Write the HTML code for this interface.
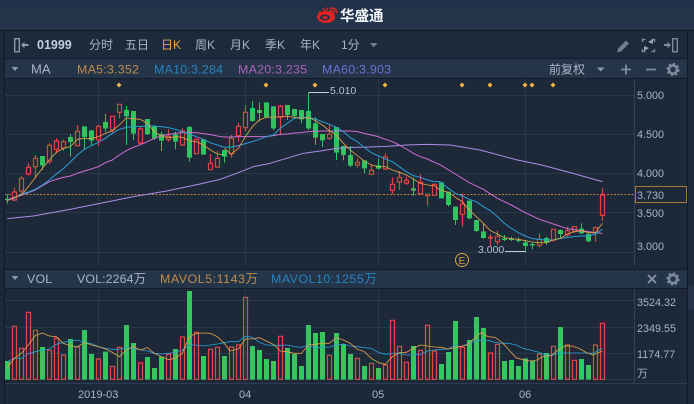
<!DOCTYPE html>
<html>
<head>
<meta charset="utf-8">
<style>
html,body{margin:0;padding:0;background:#1a2433;width:694px;height:404px;overflow:hidden}
svg{display:block}
text{font-family:"Liberation Sans","Noto Sans CJK SC",sans-serif}
</style>
</head>
<body>
<svg width="694" height="404" viewBox="0 0 694 404" xmlns="http://www.w3.org/2000/svg">
<defs>
<linearGradient id="tg" x1="0" y1="0" x2="0" y2="1"><stop offset="0" stop-color="#22324a"/><stop offset="1" stop-color="#23344b"/></linearGradient>
</defs>
<rect width="694" height="404" fill="#1c2839"/>
<rect width="694" height="30" fill="url(#tg)"/>
<rect y="30" width="694" height="1" fill="#121a26"/>
<rect x="5" y="31" width="682" height="27" fill="#1d2a3c"/>
<rect x="688" y="31" width="6" height="373" fill="#1d2a3c"/>
<rect x="688" y="285" width="6" height="24" fill="#253448"/>
<rect x="5" y="59" width="682" height="19" fill="#243449"/>
<rect y="58" x="5" width="682" height="1" fill="#131b28"/>
<rect y="78" x="5" width="682" height="1" fill="#131b28"/>
<rect x="5" y="79" width="682" height="187" fill="#1d2838"/>
<rect x="5" y="266" width="682" height="4" fill="#1c2737"/>
<rect x="5" y="269" width="682" height="1" fill="#131b28"/>
<rect x="5" y="270" width="682" height="18" fill="#243449"/>
<rect x="5" y="288" width="682" height="1" fill="#131b28"/>
<rect x="5" y="289" width="682" height="115" fill="#1d2838"/>
<rect x="4" y="31" width="1" height="373" fill="#121a26"/>
<rect x="687" y="31" width="1" height="373" fill="#121a26"/>
<rect x="5" y="383" width="682" height="1" fill="#2d3c50"/>

<!-- grid -->
<g stroke="#2a384b" stroke-width="1" fill="none">
<path d="M5 95.5H634M5 134.5H634M5 173.5H634M5 212.5H634M5 252.5H634"/>
<path d="M98.5 79V266M245.5 79V266M378.5 79V266M525.5 79V266"/>
<path d="M5 300.5H634M5 327.5H634M5 353.5H634M5 379.5H634"/>
<path d="M98.5 289V383M245.5 289V383M378.5 289V383M525.5 289V383"/>
<path d="M634.5 79V266M634.5 289V383" stroke="#344458"/>
</g>

<!-- title -->
<g>
<ellipse cx="326" cy="17" rx="9" ry="6" fill="#e2231f"/>
<ellipse cx="325" cy="17.5" rx="5" ry="3" fill="#22324a"/>
<ellipse cx="325" cy="17.5" rx="2.4" ry="1.5" fill="#e2231f"/>
<path d="M329 8.5Q336 7 337 13M329.5 11Q333.5 10 334 13.5M319 11.5L322 13M323 8.5L325 11.5M327 7.5V10.5" stroke="#e2231f" stroke-width="1.6" fill="none"/>
<text x="340" y="21" font-size="14.5" font-weight="700" fill="#f2f5f8">华盛通</text>
</g>

<!-- toolbar -->
<g font-size="12" fill="#a9b5c5">
<path d="M14.7 38.7h4.600v13h-4.600z" fill="none" stroke="#8d99a9" stroke-width="1.4"/>
<path d="M21 45l3.5-3.2v2.2h4v2h-4v2.2z" fill="#8d99a9"/>
<text x="37" y="49" font-size="12.5" font-weight="700" fill="#c3cfde">01999</text>
<text x="89" y="49">分时</text>
<text x="125" y="49">五日</text>
<text x="161" y="49" fill="#e5a94c">日K</text>
<text x="195" y="49">周K</text>
<text x="230" y="49">月K</text>
<text x="265" y="49">季K</text>
<text x="300" y="49">年K</text>
<text x="341" y="49">1分</text>
<path d="M370 43h7.5l-3.75 4.5z" fill="#6f7c8d"/>
<path d="M617 52.5l1-4 8-8 3 3-8 8z" fill="#6f7c8d"/>
<g stroke="#79869a" stroke-width="1.5" fill="none">
<path d="M642.5 42v-2.5h3M654.5 42v-2.5h-3M642.5 49v2.5h3M654.5 49v2.5h-3"/>
</g>
<path d="M648 42l5-3v5zM649 48l-5 3v-5z" fill="#9aa6b6"/>
<path d="M664 44h3.500v-2.200l3.500 3.200-3.500 3.200v-2.200h-3.500z" fill="#7f8c9e"/>
<path d="M672.700 38.700h4.600v13h-4.600z" fill="none" stroke="#7f8c9e" stroke-width="1.400"/>
</g>

<!-- MA row -->
<g font-size="12.4">
<path d="M11.5 67h7l-3.5 4z" fill="#8d99a9"/>
<text x="31" y="73.5" fill="#a9b5c5" font-size="13">MA</text>
<text x="77" y="73.5" fill="#c08d4c" letter-spacing=".25">MA5:3.352</text>
<text x="154" y="73.5" fill="#2785c0" letter-spacing=".25">MA10:3.284</text>
<text x="238" y="73.5" fill="#b15fbc" letter-spacing=".25">MA20:3.235</text>
<text x="322" y="73.5" fill="#6f6fd6" letter-spacing=".25">MA60:3.903</text>
<text x="549" y="73.5" fill="#a9b5c5" font-size="12">前复权</text>
<path d="M597 67.5h7.5l-3.75 4z" fill="#8d99a9"/>
<path d="M621 69.5h10M626 64.5v10" stroke="#7f8c9e" stroke-width="1.8" fill="none"/>
<path d="M646 69.5h10" stroke="#7f8c9e" stroke-width="1.8" fill="none"/>
<circle cx="673" cy="69.5" r="4" fill="none" stroke="#7f8c9e" stroke-width="2.4"/>
<circle cx="673" cy="69.5" r="5.8" fill="none" stroke="#7f8c9e" stroke-width="1.5" stroke-dasharray="2.5 2"/>
</g>

<!-- diamonds -->
<g fill="#f5b342">
<path d="M119 82.5l2.5 2.5-2.5 2.5-2.5-2.5zM266 82.5l2.5 2.5-2.5 2.5-2.5-2.5zM315 82.5l2.5 2.5-2.5 2.5-2.5-2.5zM385 82.5l2.5 2.5-2.5 2.5-2.5-2.5zM462 82.5l2.5 2.5-2.5 2.5-2.5-2.5zM490 82.5l2.5 2.5-2.5 2.5-2.5-2.5zM525 82.5l2.5 2.5-2.5 2.5-2.5-2.5zM532 82.5l2.5 2.5-2.5 2.5-2.5-2.5zM553 82.5l2.5 2.5-2.5 2.5-2.5-2.5z"/>
</g>

<!-- last price line -->
<path d="M5 194.5H634" stroke="#b77f44" stroke-width="1" stroke-dasharray="2 1.5" fill="none"/>

<!-- candles part 1 -->
<g transform="translate(0,90) scale(.3333333333)">
<path stroke="#2fc45e" stroke-width="3" fill="none" d="M22.5 313V341M127.5 198V240M211.5 132V200M253.5 109V178M274.5 121V168M316.5 72V125M379.5 48V165M400.5 63V150M442.5 87V135M463.5 110V150M484.5 125V183M526.5 125V178M568.5 108V215M610.5 148V194M673.5 180V218"/>
<path fill="#2fc45e" d="M15 326h15v4h-15zM120 198h15V226h-15zM204 141h15V156h-15zM246 109h15V141h-15zM267 121h15V152h-15zM309 96h15V115h-15zM372 60h15V79h-15zM393 63h15V131h-15zM435 87h15V132h-15zM456 110h15V145h-15zM477 132h15V152h-15zM519 133h15V155h-15zM561 111h15V203h-15zM603 148h15V194h-15zM666 180h15V200h-15z"/>
<path stroke="#e04544" stroke-width="3.6" fill="none" d="M43.5 293V333M64.5 258V310M85.5 220V256M106.5 195V265M148.5 160V222M169.5 145V190M190.5 148V183M232.5 105V170M295.5 105V168M337.5 79V130M358.5 43V85M421.5 110V162M505.5 118V155M547.5 115V168M589.5 145V191M631.5 192V240M652.5 183V233"/>
<path stroke="#e04544" stroke-width="3.6" fill="#1d2838" d="M37.5 306h12V330h-12zM58.5 265h12V303h-12zM79.5 232h12V252h-12zM100.5 205h12V230h-12zM142.5 166h12V214h-12zM163.5 153h12V178h-12zM184.5 155h12V174h-12zM226.5 124h12V167h-12zM289.5 109h12V149h-12zM331.5 79h12V120h-12zM352.5 43h12V67h-12zM415.5 117h12V159h-12zM499.5 139h12V149h-12zM541.5 123h12V165h-12zM583.5 148h12V191h-12zM625.5 220h12V239h-12zM646.5 205h12V231h-12z"/>
</g>
<!-- candles part 2 -->
<g transform="translate(220,85) scale(.3333333333)">
<path stroke="#2fc45e" stroke-width="3" fill="none" d="M97.5 48V110M118.5 52V110M139.5 52V96M160.5 64V135M202.5 60V105M223.5 72V97M244.5 75V115M265.5 22V135M286.5 96V180M307.5 147V186M349.5 126V225M370.5 183V226M391.5 183V246M433.5 226V265M475.5 220V254M580.5 278V332M664.5 292V340M685.5 320V365"/>
<path fill="#2fc45e" d="M90 69h15V108h-15zM111 75h15V84h-15zM132 52h15V96h-15zM153 64h15V130h-15zM195 60h15V90h-15zM216 72h15V93h-15zM237 75h15V103h-15zM258 78h15V130h-15zM279 115h15V158h-15zM300 147h15V166h-15zM342 126h15V203h-15zM363 183h15V210h-15zM384 210h15V242h-15zM426 226h15V250h-15zM468 241h15V251h-15zM573 310h15V317h-15zM657 292h15V340h-15zM678 320h15V360h-15z"/>
<path stroke="#e04544" stroke-width="3.6" fill="none" d="M34.5 150V218M55.5 113V170M76.5 60V140M181.5 60V150M328.5 120V165M412.5 220V248M454.5 238V270M496.5 205V254M517.5 278V328M538.5 258V315M559.5 275V300M601.5 268V328M622.5 328V362M643.5 296V333"/>
<path stroke="#e04544" stroke-width="3.6" fill="#1d2838" d="M28.5 160h12V206h-12zM49.5 124h12V152h-12zM70.5 82h12V128h-12zM175.5 64h12V96h-12zM322.5 148h12V160h-12zM406.5 232h12V240h-12zM448.5 256h12V268h-12zM490.5 216h12V252h-12zM511.5 298h12V316h-12zM532.5 277h12V291h-12zM553.5 286h12V294h-12zM595.5 292h12V326h-12zM616.5 328h12V332h-12zM637.5 298h12V331h-12z"/>
</g>
<!-- candles part 3 -->
<g transform="translate(440,160) scale(.3333333333)">
<path stroke="#2fc45e" stroke-width="3" fill="none" d="M46.5 140V195M88.5 122V178M109.5 180V215M130.5 190V236M193.5 225V243M214.5 230V243M235.5 232V248M256.5 240V272M277.5 248V268M319.5 230V255M361.5 208V235M424.5 190V222M445.5 218V246"/>
<path fill="#2fc45e" d="M39 140h15V180h-15zM81 122h15V175h-15zM102 180h15V213h-15zM123 214h15V234h-15zM186 236h15V240h-15zM207 236h15V240h-15zM228 240h15V243h-15zM249 247h15V258h-15zM270 252h15V256h-15zM312 234h15V248h-15zM354 210h15V222h-15zM417 206h15V220h-15zM438 222h15V244h-15z"/>
<path stroke="#e04544" stroke-width="3.6" fill="none" d="M67.5 100V200M151.5 222V258M172.5 212V255M298.5 220V262M340.5 208V245M382.5 200V232M403.5 198V218M466.5 200V245M487.5 85V183"/>
<path stroke="#e04544" stroke-width="3.6" fill="#1d2838" d="M61.5 133h12V163h-12zM145.5 232h12V234h-12zM166.5 229h12V245h-12zM292.5 238h12V256h-12zM334.5 208h12V240h-12zM376.5 212h12V224h-12zM397.5 200h12V214h-12zM460.5 203h12V218h-12zM481.5 105h12V166h-12z"/>
</g>

<!-- MA lines -->
<g fill="none" stroke-width="3" stroke-linejoin="round">
<g transform="translate(0,90) scale(.3333333333)">
<polyline stroke="#a98fe8" points="22,386 100,378 200,360 300,340 400,320 500,303 600,282 660,268"/>
<polyline stroke="#cf6fd6" points="22,330 43,322 64,316 85,308 106,300 127,287 148,275 169,268 190,262 211,258 232,250 253,243 274,237 295,230 316,218 337,210 358,195 379,182 400,172 421,164 442,155 463,145 484,138 505,133 526,130 547,128 568,127 589,128 610,131 631,134 652,138 660,140"/>
<polyline stroke="#2a9fd6" points="22,330 43,325 64,312 85,306 106,298 127,285 148,270 169,252 190,236 211,216 232,195 253,178 274,167 295,157 316,145 337,130 358,118 379,112 400,110 421,109 442,108 463,108 484,110 505,113 526,118 547,125 568,132 589,140 610,148 631,158 652,165 673,172"/>
<polyline stroke="#e0a24a" stroke-width="2.6" points="20,333 43,322 64,315 85,290 106,262 127,235 148,210 169,187 190,175 211,170 232,148 253,145 274,146 295,140 316,130 337,122 358,105 379,84 400,86 421,88 442,100 463,125 484,138 505,143 526,140 547,142 568,152 589,155 610,165 631,180 652,192 673,194"/>
</g>
<g transform="translate(220,85) scale(.3333333333)">
<polyline stroke="#a98fe8" points="0,283 50,265 100,245 150,235 200,220 250,205 300,198 350,190 400,187 450,186 500,184 560,180 620,178 690,180"/>
<polyline stroke="#cf6fd6" points="0,155 13,156 34,156 55,155 76,155 97,155 118,155 139,155 160,152 181,148 202,147 223,144 244,143 265,140 286,139 307,138 328,138 349,138 370,138 391,138 412,140 433,145 454,150 475,155 496,163 517,170 538,180 559,192 580,205 601,215 622,222 643,232 660,239"/>
<polyline stroke="#2a9fd6" points="13,187 34,186 55,182 76,176 97,170 118,163 139,155 160,150 181,130 202,115 223,100 244,97 265,97 286,102 307,110 328,118 349,127 370,140 391,158 412,170 433,187 454,203 475,213 496,222 517,230 538,245 559,260 580,272 601,277 622,285 643,290 660,290"/>
<polyline stroke="#e0a24a" stroke-width="2.6" points="13,190 34,208 55,190 76,155 97,125 118,105 139,97 160,96 181,96 202,94 223,97 244,100 265,97 286,107 307,120 328,137 349,150 370,175 391,195 412,212 433,228 454,240 475,245 496,245 517,255 538,262 559,270 580,282 601,295 622,300 643,302 660,315"/>
</g>
<g transform="translate(440,160) scale(.3333333333)">
<polyline stroke="#a98fe8" points="30,-45 120,-30 232,0 300,14 380,35 487,65"/>
<polyline stroke="#cf6fd6" points="0,14 46,42 88,68 130,88 172,115 214,135 256,158 298,178 340,192 382,206 424,212 466,218 487,220"/>
<polyline stroke="#2a9fd6" points="0,65 25,85 46,100 67,108 88,118 109,125 130,140 151,152 172,170 193,190 214,205 235,218 256,228 277,236 298,238 319,240 340,240 361,235 382,232 403,230 424,228 445,228 466,222 487,208"/>
<polyline stroke="#e0a24a" stroke-width="2.6" points="0,90 25,97 46,112 67,125 88,150 109,170 130,190 151,212 172,222 193,233 214,236 235,238 256,242 277,246 298,248 319,248 340,240 361,235 382,222 403,215 424,212 445,218 466,218 487,190"/>
</g>
</g>

<!-- labels in chart -->
<path d="M308.5 92.5H329" stroke="#c5d0dc" stroke-width="1" fill="none"/>
<path d="M308.5 92V100" stroke="#2fc45e" stroke-width="1" fill="none"/>
<text x="330" y="94" font-size="10.5" fill="#b5c0ce">5.010</text>
<text x="478" y="253" font-size="10.5" fill="#b5c0ce">3.000</text>
<path d="M505 251.5H526" stroke="#c5d0dc" stroke-width="1" fill="none"/>
<circle cx="462" cy="260" r="6.5" fill="none" stroke="#d9a248" stroke-width="1"/>
<text x="462" y="264" font-size="10" fill="#d9a248" text-anchor="middle">E</text>

<!-- y axis -->
<g font-size="10.8" fill="#a9b5c5">
<text x="637" y="99">5.000</text>
<text x="637" y="138">4.500</text>
<text x="637" y="177">4.000</text>
<text x="637" y="217">3.500</text>
<text x="637" y="250">3.000</text>
<rect x="635.5" y="186.5" width="51" height="16" fill="#1d2838" stroke="#a9763a" stroke-width="1"/>
<text x="637" y="199">3.730</text>
<text x="637" y="306">3524.32</text>
<text x="637" y="332">2349.55</text>
<text x="637" y="358">1174.77</text>
<text x="637" y="377">万</text>
</g>

<!-- VOL row -->
<g font-size="12.4">
<path d="M11.5 276h7l-3.5 4z" fill="#8d99a9"/>
<text x="27" y="283" fill="#a9b5c5" letter-spacing=".2">VOL</text>
<text x="77" y="283" fill="#a9b5c5" letter-spacing=".1">VOL:2264万</text>
<text x="160" y="283" fill="#c08d4c" letter-spacing=".55">MAVOL5:1143万</text>
<text x="271" y="283" fill="#2785c0" letter-spacing=".5">MAVOL10:1255万</text>
<path d="M648 275l8 8M656 275l-8 8" stroke="#8a96a6" stroke-width="1.8" fill="none"/>
<circle cx="673" cy="279" r="4" fill="none" stroke="#7f8c9e" stroke-width="2.4"/>
<circle cx="673" cy="279" r="5.8" fill="none" stroke="#7f8c9e" stroke-width="1.5" stroke-dasharray="2.5 2"/>
</g>

<!-- volume bars -->
<g transform="translate(0,265) scale(.3333333333)">
<path fill="#35c65f" d="M15 288h15V344h-15zM120 246h15V344h-15zM204 222h15V344h-15zM246 195h15V344h-15zM267 267h15V344h-15zM309 260h15V344h-15zM372 180h15V344h-15zM393 234h15V344h-15zM435 276h15V344h-15zM456 309h15V344h-15zM477 275h15V344h-15zM519 252h15V344h-15zM561 78h15V344h-15zM603 273h15V344h-15zM666 273h15V344h-15zM750 243h15V344h-15zM771 255h15V344h-15zM792 282h15V344h-15zM813 288h15V344h-15zM855 249h15V344h-15zM876 267h15V344h-15zM897 303h15V344h-15zM918 180h15V344h-15zM939 204h15V344h-15zM960 201h15V344h-15zM1002 204h15V344h-15zM1023 237h15V344h-15zM1044 267h15V344h-15zM1086 303h15V344h-15zM1128 309h15V344h-15zM1233 243h15V344h-15zM1317 297h15V344h-15zM1338 261h15V344h-15zM1359 168h15V344h-15zM1401 225h15V344h-15zM1422 156h15V344h-15zM1443 189h15V344h-15zM1506 288h15V344h-15zM1527 285h15V344h-15zM1548 303h15V344h-15zM1569 280h15V344h-15zM1590 288h15V344h-15zM1632 264h15V344h-15zM1674 186h15V344h-15zM1737 282h15V344h-15zM1758 300h15V344h-15z"/>
<path fill="none" stroke="#e04a49" stroke-width="3.6" d="M37.5 184h12V343h-12zM58.5 250h12V343h-12zM79.5 142h12V343h-12zM100.5 196h12V343h-12zM142.5 256h12V343h-12zM163.5 220h12V343h-12zM184.5 270h12V343h-12zM226.5 246h12V343h-12zM289.5 282h12V343h-12zM331.5 304h12V343h-12zM352.5 247h12V343h-12zM415.5 294h12V343h-12zM499.5 268h12V343h-12zM541.5 216h12V343h-12zM583.5 202h12V343h-12zM625.5 253h12V343h-12zM646.5 247h12V343h-12zM688.5 246h12V343h-12zM709.5 240h12V343h-12zM730.5 97h12V343h-12zM835.5 214h12V343h-12zM982.5 271h12V343h-12zM1066.5 280h12V343h-12zM1108.5 295h12V343h-12zM1150.5 300h12V343h-12zM1171.5 166h12V343h-12zM1192.5 244h12V343h-12zM1213.5 292h12V343h-12zM1255.5 256h12V343h-12zM1276.5 181h12V343h-12zM1297.5 258h12V343h-12zM1381.5 247h12V343h-12zM1465.5 264h12V343h-12zM1486.5 238h12V343h-12zM1612.5 267h12V343h-12zM1654.5 244h12V343h-12zM1696.5 240h12V343h-12zM1717.5 286h12V343h-12zM1780.5 240h12V343h-12zM1801.5 175h12V343h-12z"/>
</g>

<!-- volume MA lines -->
<g fill="none" stroke-width="2.5" stroke-linejoin="round">
<g transform="translate(0,265) scale(.3333333333)">
<polyline stroke="#2a9fd6" points="22,290 43,280 64,280 85,266 106,260 127,255 148,252 169,238 190,232 211,228 232,225 253,232 274,236 295,245 316,250 337,253 358,253 379,248 400,250 421,255 442,258 463,265 484,267 505,265 526,263 547,255 568,240 589,240 610,243 631,240 652,237 673,233 690,230"/>
<polyline stroke="#e0a24a" points="22,308 43,280 64,265 85,240 106,212 127,204 148,213 169,215 190,235 211,242 232,246 253,232 274,240 295,245 316,252 337,262 358,275 379,255 400,245 421,255 442,248 463,265 484,275 505,284 526,280 547,265 568,215 589,205 610,204 631,205 652,215 673,235 690,258"/>
</g>
<g transform="translate(230,265) scale(.3333333333)">
<polyline stroke="#2a9fd6" points="0,230 25,230 46,214 67,217 88,232 109,240 130,241 151,241 172,240 193,245 214,247 235,240 256,250 277,247 298,246 319,240 340,237 361,243 382,245 403,248 424,250 445,262 466,268 487,265 508,265 529,270 550,270 571,268 592,258 613,255 634,253 655,252 676,240 690,245"/>
<polyline stroke="#e0a24a" points="0,258 25,252 46,222 67,222 88,218 109,228 130,238 151,258 172,260 193,265 214,265 235,240 256,238 277,235 298,235 319,218 340,225 361,235 382,253 403,260 424,280 445,293 466,298 487,275 508,263 529,262 550,250 571,240 592,243 613,246 634,247 655,252 690,245"/>
</g>
<g transform="translate(460,265) scale(.3333333333)">
<polyline stroke="#2a9fd6" points="0,245 21,238 42,230 63,226 84,226 105,232 126,235 147,235 168,240 189,250 210,255 231,260 252,268 273,272 294,265 315,264 336,264 357,264 378,264 399,265 427,250"/>
<polyline stroke="#e0a24a" points="0,245 21,240 42,222 63,203 84,215 105,217 126,232 147,255 168,278 189,284 210,288 231,285 252,273 273,272 294,255 315,243 336,243 357,250 378,262 399,270 427,258"/>
</g>
</g>

<!-- x axis -->
<g font-size="11" fill="#a9b5c5">
<text x="78" y="398">2019-03</text>
<text x="239" y="398">04</text>
<text x="372" y="398">05</text>
<text x="519" y="398">06</text>
</g>
</svg>
</body>
</html>
